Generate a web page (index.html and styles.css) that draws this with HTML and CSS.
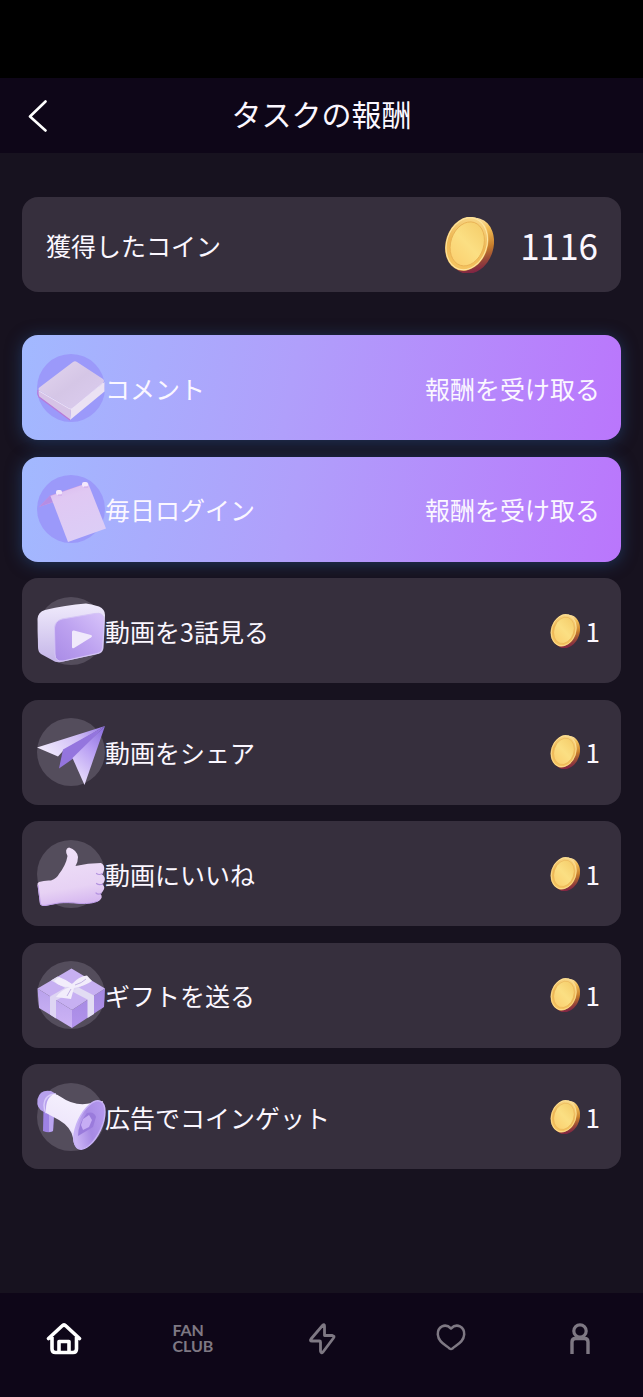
FILE: index.html
```html
<!DOCTYPE html>
<html lang="ja">
<head>
<meta charset="utf-8">
<meta name="viewport" content="width=device-width, initial-scale=1">
<title>タスクの報酬</title>
<link rel="stylesheet" href="styles.css">
</head>
<body>
<svg class="defs" width="0" height="0" aria-hidden="true">
  <defs>
    <linearGradient id="coinEdge" x1="0.2" y1="0" x2="0.65" y2="1">
      <stop offset="0" stop-color="#fff3cf"/><stop offset="0.3" stop-color="#f2bd55"/><stop offset="0.6" stop-color="#c67d2c"/><stop offset="0.8" stop-color="#9a4a38"/><stop offset="1" stop-color="#7c1f45"/>
    </linearGradient>
    <linearGradient id="coinRim" x1="0.5" y1="0" x2="0.5" y2="1">
      <stop offset="0" stop-color="#f8d786"/><stop offset="0.5" stop-color="#eeb855"/><stop offset="1" stop-color="#f6c560"/>
    </linearGradient>
    <linearGradient id="coinFace" x1="0.7" y1="0" x2="0.3" y2="1">
      <stop offset="0" stop-color="#f5ce6c"/><stop offset="0.5" stop-color="#fbdf83"/><stop offset="1" stop-color="#fbd070"/>
    </linearGradient>
    <linearGradient id="pale" x1="0" y1="0" x2="1" y2="1">
      <stop offset="0" stop-color="#e3d6ef"/><stop offset="0.5" stop-color="#d5c6e6"/><stop offset="1" stop-color="#dccdf0"/>
    </linearGradient>
    <linearGradient id="note" x1="0" y1="0" x2="0.3" y2="1">
      <stop offset="0" stop-color="#d9b8ee"/><stop offset="0.3" stop-color="#e0c8f3"/><stop offset="1" stop-color="#dccdf6"/>
    </linearGradient>
    <linearGradient id="screen" x1="0" y1="1" x2="1" y2="0">
      <stop offset="0" stop-color="#a98be6"/><stop offset="0.5" stop-color="#bda2f0"/><stop offset="1" stop-color="#d8c4fa"/>
    </linearGradient>
    <linearGradient id="shell" x1="0" y1="0" x2="0" y2="1">
      <stop offset="0" stop-color="#f0ebfc"/><stop offset="1" stop-color="#c4b5e8"/>
    </linearGradient>
    <linearGradient id="wing" x1="0" y1="0.6" x2="1" y2="0.2">
      <stop offset="0" stop-color="#f0e9fd"/><stop offset="0.6" stop-color="#cfbdf5"/><stop offset="1" stop-color="#9c80e6"/>
    </linearGradient>
    <linearGradient id="tail" x1="0.8" y1="0" x2="0.3" y2="1">
      <stop offset="0" stop-color="#8f73df"/><stop offset="0.4" stop-color="#b79df3"/><stop offset="1" stop-color="#eadffc"/>
    </linearGradient>
    <linearGradient id="hand" x1="0.3" y1="0" x2="0.5" y2="1">
      <stop offset="0" stop-color="#f0e2f9"/><stop offset="0.7" stop-color="#e7d2f4"/><stop offset="1" stop-color="#d5b6f0"/>
    </linearGradient>
    <linearGradient id="boxLeft" x1="0" y1="0" x2="0" y2="1">
      <stop offset="0" stop-color="#b9a2ec"/><stop offset="1" stop-color="#cdb4f5"/>
    </linearGradient>
    <linearGradient id="boxRight" x1="0" y1="0" x2="0" y2="1">
      <stop offset="0" stop-color="#a387e0"/><stop offset="1" stop-color="#b293ec"/>
    </linearGradient>
    <linearGradient id="horn" x1="0.6" y1="0" x2="0.2" y2="1">
      <stop offset="0" stop-color="#f6f2fe"/><stop offset="0.6" stop-color="#eee6fb"/><stop offset="1" stop-color="#b7a0ee"/>
    </linearGradient>
    <linearGradient id="mouth" x1="0.8" y1="0" x2="0.2" y2="1">
      <stop offset="0" stop-color="#b79cf1"/><stop offset="0.5" stop-color="#a78ae4"/><stop offset="1" stop-color="#d6c2fa"/>
    </linearGradient>
    <symbol id="coin" viewBox="0 0 50 56">
      <g transform="rotate(18 25 28)">
        <ellipse cx="27.500" cy="28" rx="22" ry="28.500" fill="url(#coinEdge)"/>
        <ellipse cx="22.500" cy="27.500" rx="21" ry="27.500" fill="url(#coinRim)"/>
        <ellipse cx="22.500" cy="27.500" rx="20" ry="26.500" fill="none" stroke="#fde6a4" stroke-width="1"/>
        <ellipse cx="23" cy="27.500" rx="16.500" ry="22.500" fill="url(#coinFace)" stroke="#e6ae52" stroke-width="0.800"/>
      </g>
    </symbol>
  </defs>
</svg>
<div class="app">
  <div class="status-bar"></div>
  <header class="top-bar">
    <button class="back" type="button" aria-label="戻る">
      <svg width="20" height="32" viewBox="0 0 20 32"><path d="M17.500 1.500 2 16.500l15.500 14" fill="none" stroke="currentColor" stroke-width="2.600" stroke-linecap="round" stroke-linejoin="round"/></svg>
    </button>
    <h1 class="title">タスクの報酬</h1>
  </header>

  <main class="content">
    <section class="balance">
      <span class="balance-label">獲得したコイン</span>
      <svg class="coin-large"><use href="#coin"/></svg>
      <span class="balance-value">1116</span>
    </section>

    <ul class="tasks">
      <li class="task ready">
        <svg class="task-icon" viewBox="0 0 68 68">
          <circle class="disc" cx="34" cy="34" r="34"/>
          <path d="M34 55 67.500 28V37.500L33 66Z" fill="#ebe2f3"/>
          <path d="M1 36 2 43 33 66 34 55Z" fill="#d6c3e6"/>
          <path d="M1 36Q0 40 2 43L33 66" stroke="#b879d8" stroke-width="1.200" fill="none"/>
          <path d="M3 33 36 8Q38 6.500 40 8L66 25Q68 27 66 29L36 54Q34 56 32 54L3 37Q0 35 3 33Z" fill="url(#pale)"/>
          <path d="M2 37 32 54.500Q34 56 36 54L66 29" fill="none" stroke="#efe6f8" stroke-width="0.800"/>
        </svg>
        <span class="task-name">コメント</span>
        <button class="claim" type="button">報酬を受け取る</button>
      </li>
      <li class="task ready">
        <svg class="task-icon" viewBox="0 0 68 68">
          <circle class="disc" cx="34" cy="34" r="34"/>
          <path d="M2 32 13 20.500 50 8 38 20 17 27Z" fill="#c79be6"/>
          <path d="M2 32 13 20.500 18 26Z" fill="#b58de4"/>
          <path d="M13.500 21 51 8 69 53.500 31 67Z" fill="url(#note)"/>
          <rect x="19" y="15" width="6" height="5" rx="2" fill="#f4e8fc"/>
          <rect x="45" y="7" width="6" height="5" rx="2" fill="#f4e8fc"/>
          <path d="M21 20h4M47 12h4" stroke="#cfa6e8" stroke-width="1"/>
        </svg>
        <span class="task-name">毎日ログイン</span>
        <button class="claim" type="button">報酬を受け取る</button>
      </li>
      <li class="task">
        <svg class="task-icon" viewBox="0 0 68 68">
          <circle class="disc" cx="34" cy="34" r="34"/>
          <path d="M8 13Q28 8 49 6.500Q54 7 62 9.500Q68 12 68 18L66.500 51Q66 56 61 57L24 65Q19 66 15 63L4 57Q1 55 1 50L0.500 22Q1 15 8 13Z" fill="url(#shell)"/>
          <path d="M25 22 58 16.500Q67 15 67 23L65.500 50Q65 55.500 60 56.500L26 64Q18 65 18 57L17.500 31Q18 24 25 22Z" fill="url(#screen)" stroke="#d5c5f6" stroke-width="1"/>
          <path d="M35 35Q35 33 37 33.500L54 38Q56 39 54 40.500L37 51Q35 52 35 50Z" fill="#f0e9fb"/>
        </svg>
        <span class="task-name">動画を3話見る</span>
        <svg class="coin-small"><use href="#coin"/></svg>
        <span class="reward">1</span>
      </li>
      <li class="task">
        <svg class="task-icon" viewBox="0 0 68 68">
          <circle class="disc" cx="34" cy="34" r="34"/>
          <path d="M0 29.500 68 8 26 33 21 38.500Z" fill="url(#wing)"/>
          <path d="M68 8 26 31.500 22 50.500 37 40Z" fill="#9475de"/>
          <path d="M68 8 47.500 67 35.500 40Z" fill="url(#tail)"/>
        </svg>
        <span class="task-name">動画をシェア</span>
        <svg class="coin-small"><use href="#coin"/></svg>
        <span class="reward">1</span>
      </li>
      <li class="task">
        <svg class="task-icon" viewBox="0 0 68 68">
          <circle class="disc" cx="34" cy="34" r="34"/>
          <path d="M2 42Q8 40 14 40.500Q20 38 22 34Q29 25 30.500 16Q27 9 32 7.500Q40 10 41 17Q41 22 38.500 26Q51 23 64 23Q68 25 67 30Q66.500 33 64.500 34Q69 37 67.500 41Q67 43 65 44Q69 47 66 51Q65 53 63 53.500Q67 57 62 61Q54 64 43 63.500Q30 62 22 63L8 66Q4 66 3 64L0.500 45Q0 43 2 42Z" fill="url(#hand)"/>
          <path d="M65.500 33.500Q62 35.500 59.500 33.500M66 44Q62 45.500 59.500 43.500M64 53.500Q61 55 59 53" fill="none" stroke="#b493e0" stroke-width="1.200" stroke-linecap="round"/>
          <path d="M1 45 3.500 64Q5 66 8 65.500L22 63Q30 62 43 63.500Q55 64 61 61" fill="none" stroke="#c0a0ea" stroke-width="1"/>
        </svg>
        <span class="task-name">動画にいいね</span>
        <svg class="coin-small"><use href="#coin"/></svg>
        <span class="reward">1</span>
      </li>
      <li class="task">
        <svg class="task-icon" viewBox="0 0 68 68">
          <circle class="disc" cx="34" cy="34" r="34"/>
          <path d="M0.500 27.500 35 49V67L2 47Z" fill="url(#boxLeft)"/>
          <path d="M68 27.500 35 49V67L67 46Z" fill="url(#boxRight)"/>
          <path d="M34.500 7.500 68 27.500 35 49 0.500 27.500Z" fill="#c7b0f2"/>
          <path d="M14 19.500 20.500 15.500 57 34.500V53L50.500 57V38.500Z" fill="#e2dcf3"/>
          <path d="M48 15.500 54.500 19.500 19 39.500V57.500L13 53.500V35.500Z" fill="#ded5f3"/>
          <path d="M33 26Q22 26 17 20L22 16Q30 19 35 23Q42 15 50 14.500L55 20Q48 25 37 27L34 38L19 36Q24 29 33 26Z" fill="#f2edfb"/>
          <path d="M38 24Q45 22 49 18M30 35 34 28" stroke="#c3b3e4" stroke-width="1" fill="none"/>
        </svg>
        <span class="task-name">ギフトを送る</span>
        <svg class="coin-small"><use href="#coin"/></svg>
        <span class="reward">1</span>
      </li>
      <li class="task">
        <svg class="task-icon" viewBox="0 0 68 68">
          <circle class="disc" cx="34" cy="34" r="34"/>
          <path d="M6.500 26 17 30 16 48Q12 50.500 6 48Z" fill="#9d82e4"/>
          <path d="M12 29 17 30 16 48 12 49Z" fill="#bba5f0"/>
          <path d="M14 8Q3 6 0.500 16Q-1 26 7 29L12 28 19 11Z" fill="#b7a1ed"/>
          <path d="M19 11Q8 11 7 22Q7 27 9 30" fill="none" stroke="#d8cbfa" stroke-width="1.500"/>
          <path d="M17 11Q20 11 24 14Q38 24 55 20L66 18 41 66Q36 62 36 55Q34 44 22 37L9 30Q8 15 17 11Z" fill="url(#horn)"/>
          <ellipse cx="52.500" cy="42" rx="12" ry="26" transform="rotate(25 52.500 42)" fill="url(#mouth)" stroke="#c7b1f6" stroke-width="1.500"/>
          <path d="M50 30Q57 28 59 34L56 44 41 53Q41 41 50 30Z" fill="#9a7bdc"/>
          <path d="M46 36 52 32 55 37 52 44 46 47 44 42Z" fill="#c6adf4"/>
        </svg>
        <span class="task-name">広告でコインゲット</span>
        <svg class="coin-small"><use href="#coin"/></svg>
        <span class="reward">1</span>
      </li>
    </ul>
  </main>

  <nav class="tabs" aria-label="メイン">
    <a class="tab active" href="#home" aria-label="ホーム">
      <svg viewBox="0 0 36 36"><path d="M2.500 18.500 16 6Q18 4 20 6L33.500 18.500M6 17V29Q6 32.500 9.500 32.500H27Q30.500 32.500 30.500 29V17M13 32V21.500H23V32" stroke-width="3.600"/></svg>
    </a>
    <a class="tab fan" href="#fan">FAN<br>CLUB</a>
    <a class="tab" href="#feed" aria-label="フィード">
      <svg viewBox="-1 0 36 36"><path d="M18.500 5.500 7 19Q5.500 21 8 21H15.500Q16.500 21 16.500 22V31Q17 34 19 32L29.500 18Q31 16 28.500 15.500H20.500V6Q20.500 3.500 18.500 5.500Z" stroke-width="2.800"/></svg>
    </a>
    <a class="tab" href="#likes" aria-label="お気に入り">
      <svg viewBox="-1 0 36 36"><path d="M18 8.500C12 2.500 4.500 7 4.800 14.500C5.200 22 12.500 25 16.500 28.500Q18 29.500 19.500 28.500C23.500 25 30.800 22 31.200 14.500C31.500 7 24 2.500 18 8.500Z" stroke-width="2.500"/></svg>
    </a>
    <a class="tab" href="#me" aria-label="マイページ">
      <svg viewBox="-1 0 36 36"><circle cx="18" cy="11" r="6.200" stroke-width="3.200"/><path d="M10 34V22Q10 18.500 13.500 18.500H22.500Q26 18.500 26 22V34" stroke-width="3.400" stroke-linecap="butt"/></svg>
    </a>
  </nav>
</div>
</body>
</html>
```
FILE: styles.css
```css
* {
  box-sizing: border-box;
}

body {
  margin: 0;
  background: #17121f;
  color: #fbf7ff;
  font-family: "Noto Sans CJK JP", sans-serif;
  font-size: 25px;
  line-height: 36px;
}

.defs {
  position: absolute;
}

.app {
  display: flex;
  flex-direction: column;
  min-height: 100vh;
}

.status-bar {
  height: 78px;
  background: #000;
}

.top-bar {
  display: grid;
  grid-template-columns: 48px 1fr 48px;
  align-items: center;
  height: 75px;
  padding: 0 16px;
  background: #0e0618;
}

.back {
  display: flex;
  padding: 0 12px;
  border: 0;
  background: none;
  color: #fff;
}

.title {
  margin: 0;
  padding-bottom: 6px;
  font-size: 30px;
  font-weight: 400;
  line-height: 44px;
  text-align: center;
}

.content {
  display: flex;
  flex: 1;
  flex-direction: column;
  gap: 43px;
  padding: 44px 22px 124px;
}

.balance {
  display: flex;
  align-items: center;
  min-height: 95px;
  padding: 0 23px 0 24px;
  border-radius: 16px;
  background: #362f3d;
}

.balance-label {
  flex: 1;
}

.coin-large {
  width: 50px;
  height: 56px;
}

.balance-value {
  margin-left: 26px;
  font-size: 35px;
}

.tasks {
  display: flex;
  flex: 1;
  flex-direction: column;
  justify-content: space-between;
  gap: 16px;
  margin: 0;
  padding: 0;
  list-style: none;
}

.task {
  display: flex;
  align-items: center;
  min-height: 105px;
  padding: 0 21px 0 15px;
  border-radius: 16px;
  background: #362f3d;
}

.task.ready {
  background: linear-gradient(100deg, #a2b9ff, #b09ffb 45%, #ba76fc);
  box-shadow: 0 2px 16px #2a5a9a80;
}

.task-icon {
  width: 68px;
  height: 68px;
  overflow: visible;
}

.disc {
  fill: #544d5c;
}

.ready .disc {
  fill: #9b99fa;
}

.task-name {
  flex: 1;
}

.claim {
  padding: 0;
  border: 0;
  background: none;
  color: inherit;
  font: inherit;
}

.coin-small {
  width: 30px;
  height: 34px;
}

.reward {
  margin-left: 6px;
  font-size: 26px;
}

.tabs {
  display: grid;
  grid-template-columns: repeat(5, 1fr);
  height: 104px;
  padding-bottom: 14px;
  background: #0e0618;
}

.tab {
  display: flex;
  align-items: center;
  justify-content: center;
  color: #7e7883;
  text-decoration: none;
}

.tab.active {
  color: #fff;
}

.tab svg {
  width: 36px;
  height: 36px;
  fill: none;
  stroke: currentColor;
  stroke-linecap: round;
  stroke-linejoin: round;
}

.fan {
  font-family: Lato, sans-serif;
  font-size: 16px;
  font-weight: 700;
  line-height: 16px;
}
```
